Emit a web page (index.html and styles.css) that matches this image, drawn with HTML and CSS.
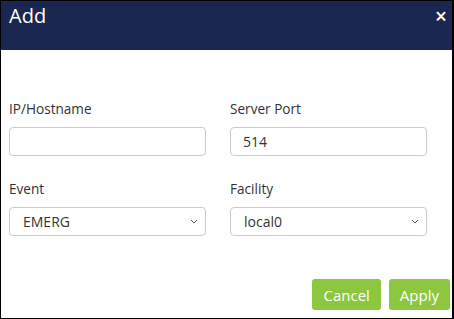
FILE: index.html
```html
<!DOCTYPE html>
<html lang="en">
<head>
    <meta charset="UTF-8">
    <meta name="viewport" content="width=device-width, initial-scale=1.0">
    <title>Add</title>
    <link rel="stylesheet" href="styles.css">
</head>
<body>
    <!-- Add Dialog -->
    <div class="dialog">
        <div class="dialog-header">
            <h2>Add</h2>
            <span class="close-btn">&#215;</span>
        </div>

        <div class="dialog-body">
            <div class="field">
                <label for="host">IP/Hostname</label>
                <input type="text" id="host">
            </div>
            <div class="field">
                <label for="port">Server Port</label>
                <input type="text" id="port" value="514">
            </div>
            <div class="field">
                <label for="event">Event</label>
                <div class="select">
                    <span>EMERG</span>
                    <svg width="8" height="5" viewBox="0 0 8 5"><path d="M1 1 L4 4 L7 1" fill="none" stroke="#555" stroke-width="1"/></svg>
                </div>
            </div>
            <div class="field">
                <label for="facility">Facility</label>
                <div class="select">
                    <span>local0</span>
                    <svg width="8" height="5" viewBox="0 0 8 5"><path d="M1 1 L4 4 L7 1" fill="none" stroke="#555" stroke-width="1"/></svg>
                </div>
            </div>
        </div>

        <div class="dialog-footer">
            <button class="btn">Cancel</button>
            <button class="btn">Apply</button>
        </div>
    </div>
</body>
</html>
```

FILE: styles.css
```css
/* Basic Reset */
* {
    margin: 0;
    padding: 0;
    box-sizing: border-box;
}

body {
    font-family: "Open Sans", "Noto Sans", sans-serif;
    color: #333;
    background: #fff;
}

/* Dialog */
.dialog {
    width: 454px;
    height: 319px;
    border: 1px solid #000;
    border-right-width: 2px;
    display: flex;
    flex-direction: column;
}

.dialog-header {
    height: 49px;
    background: #1a2851;
    color: #fff;
    display: flex;
    justify-content: space-between;
    align-items: flex-start;
    padding: 2px 5px 0 8px;
}

.dialog-header h2 {
    font-size: 20px;
    font-weight: 400;
    line-height: 26px;
}

.close-btn {
    font-size: 21px;
    line-height: 26px;
    font-weight: 600;
}

/* Form */
.dialog-body {
    display: grid;
    grid-template-columns: 197px 197px;
    column-gap: 24px;
    row-gap: 24px;
    padding: 50px 0 0 8px;
}

.field label {
    display: block;
    font-size: 13.6px;
    line-height: 18px;
    margin-bottom: 9px;
}

.field input,
.select {
    width: 197px;
    height: 29px;
    border: 1px solid #ccc;
    border-radius: 4px;
    font-family: inherit;
    font-size: 14px;
    color: #333;
    padding: 0 12px;
}

.select {
    display: flex;
    align-items: center;
    justify-content: space-between;
    padding: 0 7px 0 13px;
}

/* Footer */
.dialog-footer {
    margin-top: auto;
    display: flex;
    justify-content: flex-end;
    gap: 8px;
    padding: 0 2px 8px 0;
}

.btn {
    height: 31px;
    padding: 0 11px;
    border: none;
    border-radius: 3px;
    background-color: #8dc63f;
    color: #fff;
    font-family: inherit;
    font-size: 15px;
    cursor: pointer;
}
```
